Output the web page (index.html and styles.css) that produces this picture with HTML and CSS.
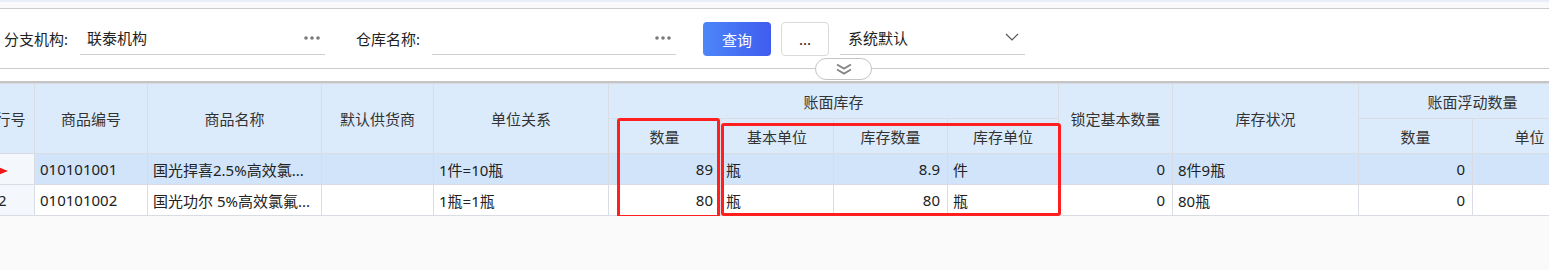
FILE: index.html
```html
<!DOCTYPE html>
<html>
<head>
	<meta charset="UTF-8">
	<title>库存查询</title>
	<link rel="stylesheet" href="styles.css">
</head>
<body>
<div class="topbar"></div>

<div class="panel">
	<div class="form">
		<label class="label">分支机构:</label>
		<div class="input input-org">
			<span class="value">联泰机构</span>
			<svg class="dots" width="16" height="4" viewBox="0 0 16 4"><circle cx="2" cy="2" r="1.8"/><circle cx="8" cy="2" r="1.8"/><circle cx="14" cy="2" r="1.8"/></svg>
		</div>
		<label class="label">仓库名称:</label>
		<div class="input input-store">
			<span class="value"></span>
			<svg class="dots" width="16" height="4" viewBox="0 0 16 4"><circle cx="2" cy="2" r="1.8"/><circle cx="8" cy="2" r="1.8"/><circle cx="14" cy="2" r="1.8"/></svg>
		</div>
		<button class="btn btn-primary">查询</button>
		<button class="btn btn-more">...</button>
		<div class="select">
			<span class="value">系统默认</span>
			<svg class="arrow" width="14" height="8" viewBox="0 0 14 8"><path d="M1 1 L7 7 L13 1" fill="none" stroke="#555" stroke-width="1.2"/></svg>
		</div>
	</div>
	<div class="toggle">
		<svg width="18" height="12" viewBox="0 0 18 12"><path d="M2 1.5 L9 5.5 L16 1.5 M2 6.5 L9 10.5 L16 6.5" fill="none" stroke="#888" stroke-width="2"/></svg>
	</div>
</div>

<div class="grid">
	<table class="table">
		<colgroup>
			<col style="width:48px"><col style="width:113px"><col style="width:174px"><col style="width:112px">
			<col style="width:175px"><col style="width:112px"><col style="width:113px"><col style="width:114px">
			<col style="width:111px"><col style="width:114px"><col style="width:186px"><col style="width:114px">
			<col style="width:114px">
		</colgroup>
		<thead>
			<tr class="head1">
				<th rowspan="2">行号</th>
				<th rowspan="2">商品编号</th>
				<th rowspan="2">商品名称</th>
				<th rowspan="2">默认供货商</th>
				<th rowspan="2">单位关系</th>
				<th colspan="4">账面库存</th>
				<th rowspan="2">锁定基本数量</th>
				<th rowspan="2">库存状况</th>
				<th colspan="2">账面浮动数量</th>
			</tr>
			<tr class="head2">
				<th>数量</th>
				<th>基本单位</th>
				<th>库存数量</th>
				<th>库存单位</th>
				<th>数量</th>
				<th>单位</th>
			</tr>
		</thead>
		<tbody>
			<tr class="current">
				<td class="rownum"><span class="pointer"></span></td>
				<td>010101001</td>
				<td>国光捍喜2.5%高效氯...</td>
				<td></td>
				<td>1件=10瓶</td>
				<td class="num">89</td>
				<td>瓶</td>
				<td class="num">8.9</td>
				<td>件</td>
				<td class="num">0</td>
				<td>8件9瓶</td>
				<td class="num">0</td>
				<td></td>
			</tr>
			<tr>
				<td class="rownum">2</td>
				<td>010101002</td>
				<td>国光功尔 5%高效氯氟...</td>
				<td></td>
				<td>1瓶=1瓶</td>
				<td class="num">80</td>
				<td>瓶</td>
				<td class="num">80</td>
				<td>瓶</td>
				<td class="num">0</td>
				<td>80瓶</td>
				<td class="num">0</td>
				<td></td>
			</tr>
		</tbody>
	</table>

	<!-- 标注框 -->
	<div class="mark mark-qty"></div>
	<div class="mark mark-unit"></div>
</div>
</body>
</html>
```

FILE: styles.css
```css
*{margin: 0;padding: 0;box-sizing: border-box;}
html,body{height: 100%;}
body{font-family: "Noto Sans", "Noto Sans CJK SC", sans-serif;font-size: 15px;color: #222;background: #fafafa;overflow: hidden;}

.topbar{height: 2px;background: #e9eef8;}
.panel{position: relative;margin-top: 6px;border-top: 1px solid #cbcbcb;background: #fff;padding-bottom: 12px;}
.form{display: flex;align-items: flex-start;height: 60px;padding: 13px 0 0 4px;border-bottom: 1px solid #cbcbcb;}
.label{width: 76px;height: 34px;line-height: 34px;color: #222;white-space: nowrap;}
.input{display: flex;align-items: center;justify-content: space-between;height: 33px;padding: 0 5px 0 7px;border-bottom: 1px solid #cfcfcf;}
.input-org{width: 245px;margin-right: 31px;}
.input-store{width: 244px;margin-right: 27px;}
.input .value{line-height: 32px;}
.dots{fill: #7a7a7a;}

.btn{height: 34px;border-radius: 4px;font-family: inherit;font-size: 15px;cursor: pointer;}
.btn-primary{width: 68px;border: none;color: #fff;background: linear-gradient(90deg, #4d86f8, #3f5cef);margin-right: 10px;}
.btn-more{width: 48px;border: 1px solid #dadada;background: #fff;color: #222;margin-right: 11px;line-height: 30px;}

.select{display: flex;align-items: center;justify-content: space-between;width: 185px;height: 33px;padding: 0 6px 0 8px;border-bottom: 1px solid #cfcfcf;}
.select .value{line-height: 32px;}
.arrow{margin-top: -2px;}

.toggle{position: absolute;left: 815px;top: 49px;width: 57px;height: 22px;border: 1px solid #c4c4c4;border-radius: 11px;background: #fff;display: flex;align-items: center;justify-content: center;}

.grid{position: relative;overflow: hidden;border-top: 2px solid #c4c4c4;}
.table{table-layout: fixed;border-collapse: collapse;width: 1600px;margin-left: -14px;}
.table th,.table td{border: 1px solid #d9dde3;white-space: nowrap;overflow: hidden;}
.table th{background: #dcebfc;font-weight: 400;color: #333;text-align: center;}
.head1 th{height: 35px;}
.head2 th{height: 35px;}
.table td{height: 31px;padding: 0 5px;background: #fff;text-align: left;}
.table tr.current td{background: #d1e4fa;}
.table td.num{text-align: right;padding-right: 7px;}
.table td.rownum,.table tr.current td.rownum{background: #f4f8fd;padding-left: 11px;}
.pointer{display: inline-block;width: 0;height: 0;border-top: 4.5px solid transparent;border-bottom: 4.5px solid transparent;border-left: 10px solid #f01818;vertical-align: middle;}

.mark{position: absolute;border: 3px solid #ff1f1f;border-radius: 3px;}
.mark-qty{left: 617px;top: 35px;width: 103px;height: 100px;}
.mark-unit{left: 721px;top: 40px;width: 340px;height: 93px;}
```
